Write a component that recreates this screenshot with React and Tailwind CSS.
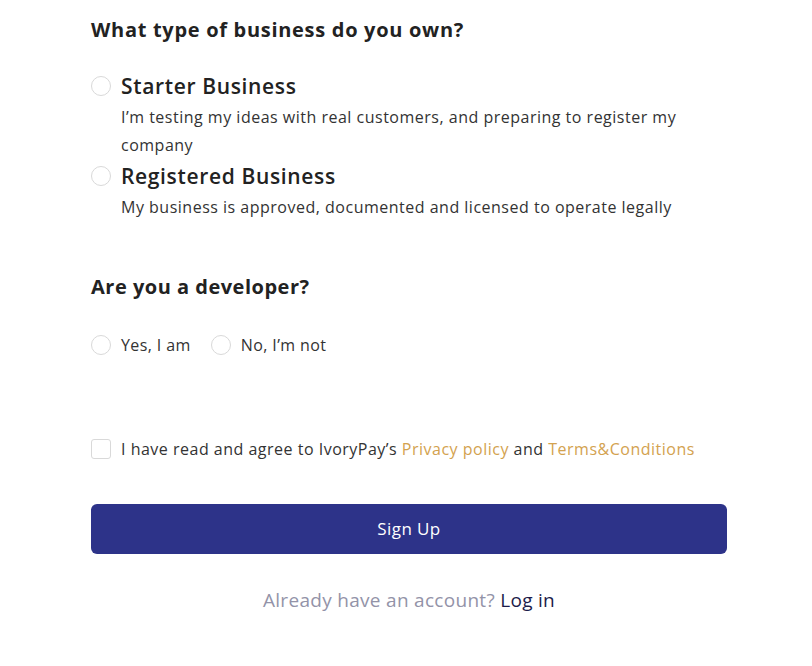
import React from "react";

const Radio = () => (
  <span className="block w-5 h-5 shrink-0 rounded-full border border-[#d9d9d9] bg-white" />
);

const BusinessOption = ({ title, desc }) => (
  <div className="flex">
    <div className="pt-[7px]">
      <Radio />
    </div>
    <div className="ml-[10px]">
      <div className="text-[21px] leading-[34px] font-semibold text-[#222] tracking-[0.65px]">{title}</div>
      <div className="text-[16px] leading-[28px] text-[#333] tracking-[0.5px]">{desc}</div>
    </div>
  </div>
);

const App = () => {
  return (
    <div className="bg-white min-h-[666px] font-['Open_Sans',sans-serif]">
      <div className="ml-[91px] w-[636px] pt-[16px]">
        <h2 className="text-[20px] leading-[28px] font-bold text-[#222] tracking-[0.7px]">
          What type of business do you own?
        </h2>

        <div className="mt-[25px] flex flex-col pr-[40px]">
          <BusinessOption
            title="Starter Business"
            desc="I’m testing my ideas with real customers, and preparing to register my company"
          />
          <BusinessOption
            title="Registered Business"
            desc="My business is approved, documented and licensed to operate legally"
          />
        </div>

        <h2 className="mt-[52px] text-[20px] leading-[28px] font-bold text-[#222] tracking-[0.5px]">
          Are you a developer?
        </h2>

        <div className="mt-[32px] flex items-center tracking-[0.4px]">
          <div className="flex items-center">
            <Radio />
            <span className="ml-[10px] text-[16px] text-[#333]">Yes, I am</span>
          </div>
          <div className="flex items-center ml-[20px]">
            <Radio />
            <span className="ml-[10px] text-[16px] text-[#333]">No, I’m not</span>
          </div>
        </div>

        <div className="mt-[80px] flex items-center">
          <span className="block w-5 h-5 rounded-[3px] border border-[#d9d9d9] bg-white" />
          <span className="ml-[10px] text-[16px] text-[#333] tracking-[0.5px]">
            I have read and agree to IvoryPay’s{" "}
            <a className="text-[#d3a24f]">Privacy policy</a> and{" "}
            <a className="text-[#d3a24f]">Terms&amp;Conditions</a>
          </span>
        </div>

        <button className="mt-[43px] w-full h-[50px] rounded-[6px] bg-[#2d3389] text-white text-[17px] font-medium tracking-[0.4px]">
          Sign Up
        </button>

        <p className="mt-[32px] text-center text-[19px] text-[#9393a8] tracking-[0.3px]">
          Already have an account? <a className="text-[#1c1c4a]">Log in</a>
        </p>
      </div>
    </div>
  );
};

export default App;
